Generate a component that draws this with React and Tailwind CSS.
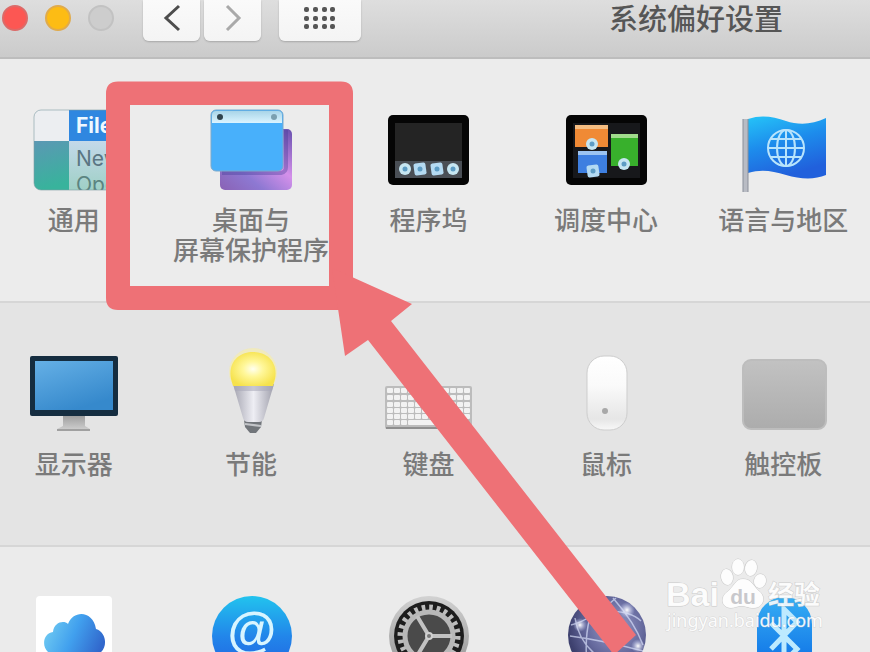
import React from "react";

const FONT = "font-['Liberation_Sans','Noto_Sans_CJK_SC',sans-serif]";

function Icon({ children }) {
  return (
    <svg viewBox="0 0 90 84" className="h-[84px] w-[90px] overflow-visible" aria-hidden="true">
      {children}
    </svg>
  );
}

function GeneralIcon() {
  return (
    <Icon>
      <defs>
        <linearGradient id="gen" x1="0" y1="0" x2="0.2" y2="1">
          <stop offset="0" stopColor="#5b98b4" />
          <stop offset="1" stopColor="#38b39c" />
        </linearGradient>
        <linearGradient id="genMenu" x1="0" y1="0" x2="0" y2="1">
          <stop offset="0" stopColor="#c4d9ea" />
          <stop offset="1" stopColor="#9fd0c6" />
        </linearGradient>
        <clipPath id="genClip">
          <rect x="5" y="3" width="80" height="80" rx="7" />
        </clipPath>
      </defs>
      <g clipPath="url(#genClip)">
        <rect x="5" y="3" width="80" height="80" fill="#eceef1" />
        <rect x="5" y="34" width="35" height="49" fill="url(#gen)" />
        <rect x="40" y="3" width="45" height="31" fill="#2f87e0" />
        <rect x="40" y="34" width="45" height="49" fill="url(#genMenu)" />
        <text x="47" y="26" fontSize="21" fontWeight="700" fill="#eef8ff" fontFamily="Inter, sans-serif">File</text>
        <text x="47" y="59" fontSize="21" fill="#5b7683" fontFamily="Inter, sans-serif">New</text>
        <text x="47" y="85" fontSize="21" fill="#5b8480" fontFamily="Inter, sans-serif">Open</text>
      </g>
      <rect x="5" y="3" width="80" height="80" rx="7" fill="none" stroke="#7f9da3" strokeOpacity=".6" />
    </Icon>
  );
}

function DesktopIcon() {
  return (
    <Icon>
      <defs>
        <linearGradient id="dskBack" x1="0" y1="1" x2="1" y2="0">
          <stop offset="0" stopColor="#8a62b4" />
          <stop offset=".3" stopColor="#8d78d2" />
          <stop offset=".6" stopColor="#d490ea" />
          <stop offset="1" stopColor="#664fae" />
        </linearGradient>
        <linearGradient id="dskBar" x1="0" y1="0" x2="0" y2="1">
          <stop offset="0" stopColor="#a9d5e8" />
          <stop offset="1" stopColor="#dbf4ff" />
        </linearGradient>
      </defs>
      <rect x="14" y="22" width="72" height="61" rx="5" fill="url(#dskBack)" />
      <path d="M16 66h59q5-1 5-6V23" fill="none" stroke="#3d3692" strokeOpacity=".35" strokeWidth="4" />
      <rect x="5" y="3" width="72" height="61" rx="5" fill="#48b0fb" stroke="#7aa9cc" />
      <path d="M6 16V8q0-4 4-4h62q4 0 4 4v8z" fill="url(#dskBar)" />
      <circle cx="14" cy="10" r="3" fill="#2f434d" />
      <circle cx="68" cy="10" r="3" fill="#7ba0b0" />
    </Icon>
  );
}

function Badge({ x, y, square }) {
  return (
    <g transform={`translate(${x} ${y})`}>
      {square ? (
        <rect x="-6" y="-6" width="12" height="12" rx="2" fill="#b4daf2" transform="rotate(-8)" />
      ) : (
        <circle r="6" fill="#c6e6f2" />
      )}
      <circle r="2.500" fill="#5d9cc4" />
    </g>
  );
}

function DockIcon() {
  return (
    <Icon>
      <rect x="5" y="8" width="81" height="70" rx="5" fill="#050505" />
      <rect x="12" y="16" width="67" height="55" fill="#242424" />
      <rect x="12" y="54" width="67" height="17" fill="#4a4f56" />
      <Badge x={22} y={62} />
      <Badge x={37} y={62} square />
      <Badge x={54} y={62} square />
      <Badge x={70} y={62} />
    </Icon>
  );
}

function MissionIcon() {
  return (
    <Icon>
      <rect x="5" y="8" width="81" height="70" rx="5" fill="#050505" />
      <rect x="12" y="16" width="67" height="55" fill="#17181b" />
      <rect x="14" y="18" width="33" height="22" fill="#f08a35" />
      <rect x="14" y="18" width="33" height="4" fill="#f5bd82" />
      <rect x="17" y="44" width="29" height="22" fill="#3e7fe0" />
      <rect x="17" y="44" width="29" height="4" fill="#9cc3f0" />
      <rect x="50" y="27" width="27" height="32" fill="#38b02c" />
      <rect x="50" y="27" width="27" height="4" fill="#a0dc8c" />
      <Badge x={31} y={37} />
      <Badge x={32} y={64} square />
      <Badge x={63} y={57} />
    </Icon>
  );
}

function FlagIcon() {
  return (
    <Icon>
      <defs>
        <linearGradient id="flag" x1="0" y1="0" x2=".35" y2="1">
          <stop offset="0" stopColor="#25c4f8" />
          <stop offset=".5" stopColor="#1d8cec" />
          <stop offset="1" stopColor="#2160dc" />
        </linearGradient>
      </defs>
      <path d="M10 12C24 7 36 10 48 14S74 18 88 11V68C76 73 62 72 48 68S24 62 10 66z" fill="url(#flag)" />
      <rect x="5" y="12" width="5" height="73" fill="#b9bcc4" />
      <path d="M5 12v73M10 12v73" stroke="#8a8f9a" />
      <g fill="none" stroke="#b8e4fc" strokeWidth="2">
        <circle cx="48" cy="41" r="18" />
        <ellipse cx="48" cy="41" rx="9" ry="18" />
        <path d="M30 41h36M48 23v36M33 32h30M33 50h30" />
      </g>
    </Icon>
  );
}

function DisplayIcon() {
  return (
    <Icon>
      <defs>
        <linearGradient id="scr" x1="0" y1="0" x2=".5" y2="1">
          <stop offset="0" stopColor="#65b0e6" />
          <stop offset="1" stopColor="#3689cc" />
        </linearGradient>
        <linearGradient id="stand" x1="0" y1="0" x2="0" y2="1">
          <stop offset="0" stopColor="#9c9c9c" />
          <stop offset="1" stopColor="#d2d2d2" />
        </linearGradient>
      </defs>
      <path d="M34 64h22v11l5 3v2H28v-2l6-3z" fill="url(#stand)" />
      <path d="M28 79h33" stroke="#a0a0a0" strokeWidth="2" />
      <rect x="1" y="5" width="88" height="60" rx="2" fill="#152d40" />
      <rect x="6" y="10" width="78" height="49" fill="url(#scr)" />
    </Icon>
  );
}

function BulbIcon() {
  return (
    <Icon>
      <defs>
        <radialGradient id="glow" cx=".5" cy=".5" r=".55">
          <stop offset="0" stopColor="#fffff0" />
          <stop offset=".4" stopColor="#fff79a" />
          <stop offset="1" stopColor="#f6e24c" />
        </radialGradient>
        <linearGradient id="bulbBody" x1="0" y1="0" x2="1" y2="0">
          <stop offset="0" stopColor="#a4a4b0" />
          <stop offset=".5" stopColor="#eeeef4" />
          <stop offset="1" stopColor="#a0a0ac" />
        </linearGradient>
      </defs>
      <circle cx="47" cy="21" r="24" fill="#fbef9a" opacity=".5" />
      <path d="M38 69h18l-1 7-5 6h-6l-5-6z" fill="#71757a" />
      <path d="M39 73l16 2" stroke="#c2c4c8" strokeWidth="2" />
      <path d="M27 33h41L58 67q-1 4-5 4H42q-4 0-5-4z" fill="url(#bulbBody)" />
      <path d="M27 33h41l-2 7H29z" fill="#a8a8b8" opacity=".55" />
      <path d="M25 28C18-8 76-8 69 28L67 35H27z" fill="url(#glow)" />
    </Icon>
  );
}

function KeyboardIcon() {
  const rows = [37, 44, 51, 57, 63, 69];
  return (
    <Icon>
      <rect x="2" y="35" width="87" height="43" rx="2" fill="#bcbcbc" />
      {rows.map((y, r) =>
        Array.from({ length: r === 5 ? 7 : 12 }, (_, i) => (
          <rect
            key={`${r}-${i}`}
            x={r === 5 ? [4, 11, 18, 25, 61, 69, 77][i] : 4 + i * 7}
            y={y}
            width={r === 5 && i === 3 ? 34 : 6}
            height="5"
            rx="1"
            fill="#f2f2f2"
          />
        ))
      )}
      <path d="M3 77h85" stroke="#8f8f8f" strokeWidth="2" />
    </Icon>
  );
}

function MouseIcon() {
  return (
    <Icon>
      <defs>
        <linearGradient id="mouse" x1="0" y1="0" x2="0" y2="1">
          <stop offset="0" stopColor="#ffffff" />
          <stop offset=".4" stopColor="#fafafa" />
          <stop offset=".85" stopColor="#e6e6e6" />
          <stop offset="1" stopColor="#f8f8f8" />
        </linearGradient>
      </defs>
      <rect x="26" y="5" width="40" height="74" rx="17" fill="url(#mouse)" stroke="#cdcdcd" />
      <circle cx="44" cy="60" r="3" fill="#a8a8a8" />
    </Icon>
  );
}

function TrackpadIcon() {
  return (
    <Icon>
      <defs>
        <linearGradient id="pad" x1="0" y1="0" x2="0" y2="1">
          <stop offset="0" stopColor="#c2c2c2" />
          <stop offset="1" stopColor="#acacac" />
        </linearGradient>
      </defs>
      <rect x="5" y="9" width="83" height="69" rx="8" fill="url(#pad)" stroke="#bdbdbd" strokeWidth="2" />
    </Icon>
  );
}

function CloudIcon() {
  return (
    <Icon>
      <defs>
        <linearGradient id="cloud" x1="0" y1=".3" x2="1" y2=".6">
          <stop offset="0" stopColor="#72cdf2" />
          <stop offset=".5" stopColor="#41a0ee" />
          <stop offset="1" stopColor="#3167cc" />
        </linearGradient>
      </defs>
      <rect x="7" y="1" width="76" height="78" rx="4" fill="#fff" />
      <path d="M28 60C11 60 12 38 24 37 25 27 35 25 39 29 44 15 64 15 67 34 80 38 79 60 64 60z" fill="url(#cloud)" />
    </Icon>
  );
}

function AtIcon() {
  return (
    <Icon>
      <defs>
        <linearGradient id="at" x1="0" y1="0" x2="0" y2="1">
          <stop offset="0" stopColor="#22c3ee" />
          <stop offset=".5" stopColor="#2286ea" />
          <stop offset="1" stopColor="#1f5fe0" />
        </linearGradient>
      </defs>
      <circle cx="46" cy="41" r="40" fill="url(#at)" />
      <text x="46" y="53" textAnchor="middle" fontSize="50" fontWeight="700" fill="#d8f5ff" fontFamily="'Liberation Sans', sans-serif">@</text>
    </Icon>
  );
}

function GearIcon() {
  return (
    <Icon>
      <defs>
        <linearGradient id="rim" x1="0" y1="0" x2="0" y2="1">
          <stop offset="0" stopColor="#d2d2d2" />
          <stop offset="1" stopColor="#8e8e8e" />
        </linearGradient>
      </defs>
      <circle cx="46" cy="41" r="40" fill="url(#rim)" />
      <circle cx="46" cy="41" r="35" fill="#1d1d1d" />
      <circle cx="46" cy="41" r="28" fill="none" stroke="#bdbdbd" strokeWidth="7" strokeDasharray="3.500 3.830" />
      <circle cx="46" cy="41" r="24" fill="#4a4a4a" stroke="#b8b8b8" strokeWidth="5" />
      <path d="M46 41h23M46 41L34 21M46 41L34 61" stroke="#c2c2c2" strokeWidth="4" />
      <circle cx="46" cy="41" r="4" fill="#d0d0d0" />
      <circle cx="46" cy="41" r="2" fill="#777" />
    </Icon>
  );
}

function NetworkIcon() {
  return (
    <Icon>
      <defs>
        <radialGradient id="net" cx=".6" cy=".4" r=".6">
          <stop offset="0" stopColor="#9c9fcb" />
          <stop offset=".6" stopColor="#666a9e" />
          <stop offset="1" stopColor="#3d406e" />
        </radialGradient>
        <radialGradient id="spark">
          <stop offset="0" stopColor="#ffffff" />
          <stop offset="1" stopColor="#c4cdf5" stopOpacity="0" />
        </radialGradient>
      </defs>
      <circle cx="46" cy="40" r="39" fill="url(#net)" />
      <g fill="none" stroke="#dfe6ff" strokeWidth="1.500" opacity=".65">
        <path d="M10 30Q30 25 55 3M14 23Q20 60 60 72M9 41Q40 45 82 56M52 3Q74 28 82 50M38 4Q22 25 26 70M45 16Q70 16 80 26" />
      </g>
      <circle cx="19" cy="30" r="7" fill="url(#spark)" />
      <circle cx="66" cy="15" r="8" fill="url(#spark)" />
      <circle cx="77" cy="51" r="7" fill="url(#spark)" />
    </Icon>
  );
}

function BluetoothIcon() {
  return (
    <Icon>
      <defs>
        <linearGradient id="bt" x1="0" y1="0" x2="0" y2="1">
          <stop offset="0" stopColor="#36aef4" />
          <stop offset="1" stopColor="#0868e4" />
        </linearGradient>
      </defs>
      <rect x="19" y="2" width="55" height="80" rx="27" fill="url(#bt)" />
      <path d="M33 28l26 26-13 13V14l13 13-26 27" fill="none" stroke="#bdeaff" strokeWidth="5" />
    </Icon>
  );
}

const ROWS = [
  {
    tone: "bg-[#ececec]",
    items: [
      { name: "通用", icon: GeneralIcon },
      { name: "桌面与\n屏幕保护程序", icon: DesktopIcon },
      { name: "程序坞", icon: DockIcon },
      { name: "调度中心", icon: MissionIcon },
      { name: "语言与地区", icon: FlagIcon },
    ],
  },
  {
    tone: "bg-[#e4e4e4]",
    items: [
      { name: "显示器", icon: DisplayIcon },
      { name: "节能", icon: BulbIcon },
      { name: "键盘", icon: KeyboardIcon },
      { name: "鼠标", icon: MouseIcon },
      { name: "触控板", icon: TrackpadIcon },
    ],
  },
  {
    tone: "bg-[#ebebeb]",
    items: [
      { hint: "iCloud", icon: CloudIcon },
      { hint: "互联网帐户", icon: AtIcon },
      { hint: "软件更新", icon: GearIcon },
      { hint: "网络", icon: NetworkIcon },
      { hint: "蓝牙", icon: BluetoothIcon },
    ],
  },
];

function Toolbar() {
  const key =
    "flex h-[41px] items-start justify-center rounded-b-md bg-gradient-to-b from-[#fafafa] to-[#f4f4f4] pt-1 shadow-[0_1px_2px_rgba(0,0,0,0.2)]";
  return (
    <header className="flex h-[59px] items-start border-b-2 border-[#bdbdbd] bg-gradient-to-b from-[#dedede] to-[#cbcbcb]">
      <div className="ml-[2px] flex gap-[17px] pt-[5px]">
        <button aria-label="关闭" className="size-[26px] rounded-full border-2 border-[#dc6a68] bg-[#fc5753]" />
        <button aria-label="最小化" className="size-[26px] rounded-full border-2 border-[#e0ab4c] bg-[#fdbc14]" />
        <button aria-label="缩放" className="size-[26px] rounded-full border-2 border-[#c2c2c2] bg-[#cdcdcd]" />
      </div>
      <div className="ml-[29px] flex gap-1">
        <button aria-label="后退" className={`${key} w-[57px]`}>
          <svg width="28" height="28" viewBox="0 0 28 28" fill="none" stroke="#4d4d4d" strokeWidth="3">
            <path d="M21 2L8 14l13 12" />
          </svg>
        </button>
        <button aria-label="前进" className={`${key} w-[57px]`}>
          <svg width="28" height="28" viewBox="0 0 28 28" fill="none" stroke="#a9a9a9" strokeWidth="3">
            <path d="M8 2l12 12L8 26" />
          </svg>
        </button>
      </div>
      <button aria-label="显示全部" className={`${key} ml-[18px] w-[82px]`}>
        <svg width="32" height="28" viewBox="0 0 32 28" fill="#555">
          {[3, 12, 20].map((y) => [0, 9, 18, 26].map((x) => <rect key={`${x}-${y}`} x={x} y={y} width="5" height="5" rx="2" />))}
        </svg>
      </button>
      <h1 className="mr-[87px] ml-auto text-[29px] leading-[40px] font-medium text-[#565656]">系统偏好设置</h1>
    </header>
  );
}

function Highlight() {
  return (
    <svg className="pointer-events-none absolute top-0 left-0" width="870" height="652" viewBox="0 0 870 652" aria-hidden="true">
      <g fill="#ee7176">
        <path
          fillRule="evenodd"
          d="M118 81.500H341Q353 81.500 353 93.500V298Q353 310 341 310H118Q106 310 106 298V93.500Q106 81.500 118 81.500ZM130 105V286H329V105Z"
        />
        <path d="M332 268L412 304 391 321 636 635 614 655 368 340 345 356Z" />
      </g>
    </svg>
  );
}

function Watermark() {
  return (
    <svg
      className="pointer-events-none absolute top-[555px] left-[664px]"
      width="164"
      height="80"
      viewBox="0 0 164 80"
      role="img"
      aria-label="Baidu 经验"
    >
      <g fill="#fff" fillOpacity=".88" stroke="#bcbcbc" strokeOpacity=".7" strokeWidth="1" paintOrder="stroke">
        <text x="2" y="51" fontSize="34" fontWeight="700" fontFamily="'Liberation Sans', sans-serif">Bai</text>
        <text x="104" y="49" fontSize="26" fontWeight="700" fontFamily="'Noto Sans CJK SC', sans-serif">经验</text>
        <ellipse cx="63" cy="22" rx="6" ry="8" transform="rotate(-10 63 22)" />
        <ellipse cx="74" cy="12" rx="6" ry="8" />
        <ellipse cx="87" cy="13" rx="6" ry="8" transform="rotate(10 87 13)" />
        <ellipse cx="96" cy="26" rx="6" ry="7" transform="rotate(15 96 26)" />
        <path d="M79 24C88 24 89 31 95 36 103 42 99 53 90 53 83 53 82 51 78 51S70 53 67 53C57 53 56 42 63 37 70 32 71 24 79 24Z" />
      </g>
      <text x="3" y="72" fontSize="18" fill="#fff" fillOpacity=".92" stroke="#bcbcbc" strokeOpacity=".45" paintOrder="stroke" fontFamily="'Noto Sans', sans-serif">jingyan.baidu.com</text>
      <text x="79" y="49" textAnchor="middle" fontSize="21" fontWeight="700" fill="#c8c8cc" fontFamily="'Liberation Sans', sans-serif">du</text>
    </svg>
  );
}

export default function App() {
  return (
    <div className={`relative h-screen overflow-hidden bg-[#ebebeb] ${FONT}`}>
      <Toolbar />
      <main>
        {ROWS.map((row, i) => (
          <section key={i} className={`border-b-2 border-[#d6d6d6] pt-12 pb-[35px] ${row.tone}`}>
            <div className="-mr-[2px] -ml-[15px] grid grid-cols-5">
              {row.items.map(({ name, hint, icon: Glyph }) => (
                <button key={name || hint} aria-label={hint} className="flex flex-col items-center gap-[15px]">
                  <Glyph />
                  {name && (
                    <span className="min-h-[60px] text-[26px] leading-[30px] font-medium whitespace-pre text-[#7a7a7a]">{name}</span>
                  )}
                </button>
              ))}
            </div>
          </section>
        ))}
      </main>
      <Highlight />
      <Watermark />
    </div>
  );
}
